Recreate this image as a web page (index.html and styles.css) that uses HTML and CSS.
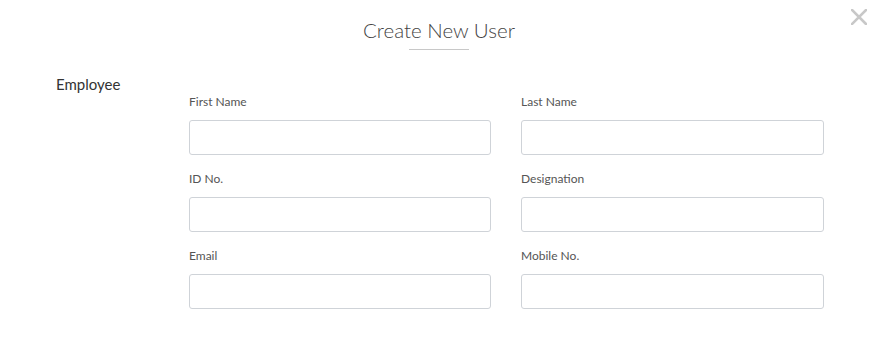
FILE: index.html
```html
<!DOCTYPE html>
<html lang="en">
<head>
  <meta charset="UTF-8">
  <meta name="viewport" content="width=device-width, initial-scale=1.0">
  <title>Create New User</title>
  <link rel="stylesheet" href="styles.css">
</head>
<body>
  <div class="modal">
    <button class="close-button" type="button" aria-label="Close">
      <svg width="16" height="16" viewBox="0 0 16 16">
        <path d="M1 1 L15 15 M15 1 L1 15" stroke="#c8c8c8" stroke-width="2.6" stroke-linecap="square" fill="none"/>
      </svg>
    </button>

    <div class="modal-header">
      <h2>Create New User</h2>
      <div class="title-line"></div>
    </div>

    <!-- Employee Section -->
    <div class="section">
      <div class="section-title">Employee</div>
      <div class="field-grid">
        <div class="field">
          <label for="first-name">First Name</label>
          <input type="text" id="first-name">
        </div>
        <div class="field">
          <label for="last-name">Last Name</label>
          <input type="text" id="last-name">
        </div>
        <div class="field">
          <label for="id-no">ID No.</label>
          <input type="text" id="id-no">
        </div>
        <div class="field">
          <label for="designation">Designation</label>
          <input type="text" id="designation">
        </div>
        <div class="field">
          <label for="email">Email</label>
          <input type="email" id="email">
        </div>
        <div class="field">
          <label for="mobile">Mobile No.</label>
          <input type="text" id="mobile">
        </div>
      </div>
    </div>
  </div>
</body>
</html>
```

FILE: styles.css
```css
body {
  font-family: Lato, "Open Sans", sans-serif;
  margin: 0;
  padding: 0;
  background-color: white;
}
.modal {
  position: relative;
  width: 884px;
  height: 340px;
  padding-top: 18px;
  box-sizing: border-box;
}
.close-button {
  position: absolute;
  top: 9px;
  right: 17px;
  width: 16px;
  height: 16px;
  padding: 0;
  border: none;
  background: none;
  cursor: pointer;
}
.close-button svg {
  display: block;
}
.modal-header {
  display: flex;
  flex-direction: column;
  align-items: center;
  padding-right: 6px;
}
.modal-header h2 {
  margin: 0;
  font-size: 20.5px;
  line-height: 24px;
  font-weight: 300;
  color: #444;
}
.title-line {
  width: 60px;
  height: 1px;
  margin-top: 7px;
  background-color: #c8c8c8;
}
.section {
  display: flex;
  margin-top: 26px;
}
.section-title {
  width: 133px;
  padding-left: 56px;
  margin-top: -2px;
  font-size: 15px;
  line-height: 20px;
  color: #333;
}
.field-grid {
  display: grid;
  grid-template-columns: 302px 303px;
  column-gap: 30px;
  row-gap: 16px;
  padding-top: 18px;
}
.field {
  display: flex;
  flex-direction: column;
}
.field label {
  font-size: 12px;
  line-height: 16px;
  color: #555;
  margin-bottom: 10px;
}
.field input {
  height: 35px;
  box-sizing: border-box;
  border: 1px solid #cfd3d8;
  border-radius: 3px;
  padding: 0 10px;
  font-family: inherit;
  font-size: 13px;
}
```
